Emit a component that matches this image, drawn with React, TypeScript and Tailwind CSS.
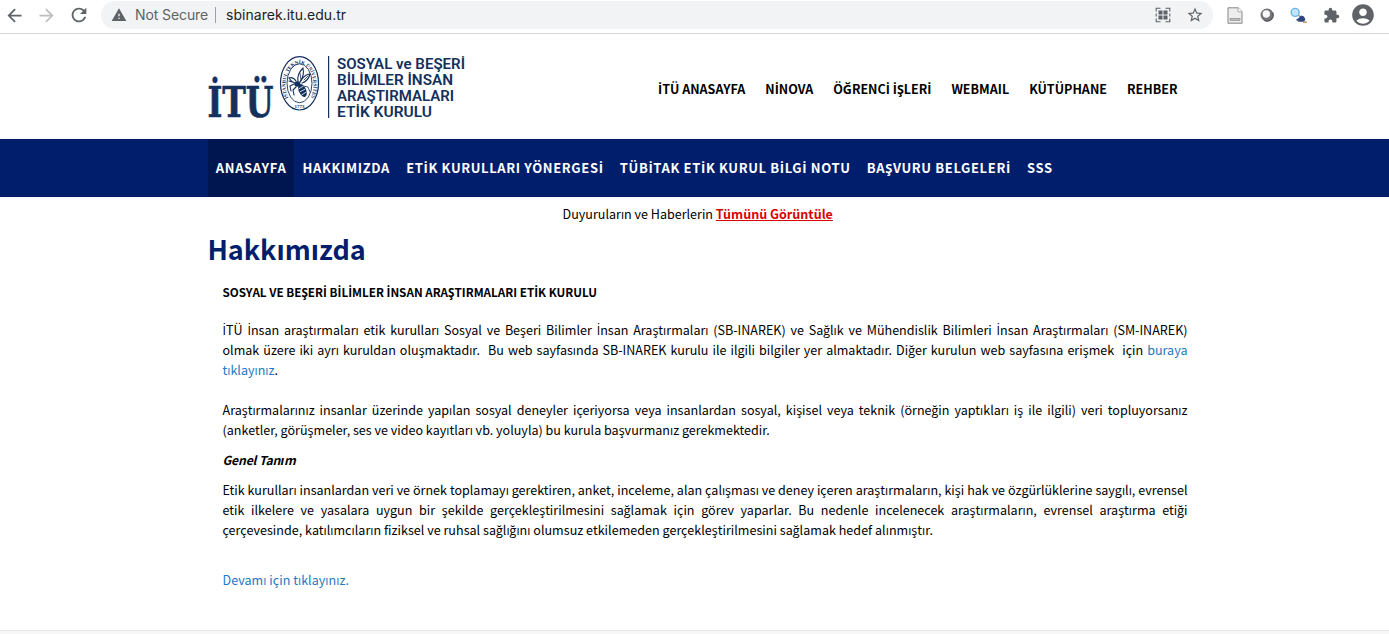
import { Fragment, ReactNode } from "react";
import { MdArrowBack, MdArrowForward, MdRefresh, MdWarning, MdStarBorder, MdExtension, MdAccountCircle } from "react-icons/md";

const quickLinks = ["İTÜ ANASAYFA", "NİNOVA", "ÖĞRENCİ İŞLERİ", "WEBMAIL", "KÜTÜPHANE", "REHBER"];
const menu = [
  "ANASAYFA",
  "HAKKIMIZDA",
  "ETİK KURULLARI YÖNERGESİ",
  "TÜBİTAK ETİK KURUL BİLGİ NOTU",
  "BAŞVURU BELGELERİ",
  "SSS",
];

/* Dotted capital I comes from Open Sans: the main face has no precomposed glyph. */
function Tr({ children }: { children: string }) {
  return (
    <>
      {children.split("İ").map((part, i) => (
        <Fragment key={i}>
          {i > 0 && <span className="font-['Open_Sans'] leading-[0]">İ</span>}
          {part}
        </Fragment>
      ))}
    </>
  );
}

function Justified({ children }: { children: ReactNode }) {
  return <span className="block whitespace-pre-wrap text-justify [text-align-last:justify]">{children}</span>;
}

function QrIcon() {
  return (
    <svg width="16" height="16" viewBox="0 0 16 16" fill="none" stroke="#5f6368" strokeWidth="1.1">
      <path d="M1.2 4.5V1.2H5.5M10.5 1.2h4.3V4.5M14.8 11.5v3.3H10.5M5.5 14.8H1.2V11.5M1.2 6.5v3M14.8 6.5v3" />
      <g fill="#5f6368" stroke="none">
        <rect x="3.5" y="3.5" width="4" height="4" />
        <rect x="8.5" y="3.5" width="4" height="4" />
        <rect x="3.5" y="8.5" width="4" height="4" />
        <rect x="8.5" y="8.5" width="4" height="4" />
      </g>
    </svg>
  );
}

function BrowserBar() {
  return (
    <div className="flex h-[34px] shrink-0 items-start border-b border-[#d5d7d9] bg-white pl-[4px] pr-[13px] font-['Inter',sans-serif]">
      <div className="flex h-[30px] w-[97px] items-center gap-[11px] text-[#5f6368]">
        <MdArrowBack size={21} />
        <MdArrowForward size={21} className="text-[#bcbec0]" />
        <MdRefresh size={22} />
      </div>
      <div className="mt-px flex h-7 w-[1112px] items-center rounded-full bg-[#f1f3f4] pl-[10px] pr-[9px] text-[14px] leading-7">
        <MdWarning size={16} className="text-[#5f6368]" />
        <span className="ml-2 w-[74px] whitespace-nowrap tracking-[-0.1px] text-[#5f6368]">Not Secure</span>
        <span className="ml-[6px] h-4 w-px bg-[#9aa0a6]" />
        <span className="ml-[10px] tracking-[0.03px] text-[#202124]">sbinarek.itu.edu.tr</span>
        <span className="ml-auto flex items-center gap-[15px] text-[#5f6368]">
          <QrIcon />
          <MdStarBorder size={18} />
        </span>
      </div>
      <div className="ml-auto flex h-[30px] items-center">
        <svg width="16" height="17" viewBox="0 0 16 17">
          <path d="M1 .8h10.2L15 4.6v11.6H1z" fill="#ededed" stroke="#858585" />
          <path d="M11 .8v4h4" fill="#fff" stroke="#999" strokeWidth="0.8" />
          <rect x="3" y="11.3" width="10" height="2.2" fill="#bbb" stroke="#888" strokeWidth="0.6" />
        </svg>
        <svg className="ml-[17px]" width="14" height="14" viewBox="0 0 14 14">
          <circle cx="7" cy="7" r="6.5" fill="#747578" />
          <path d="M12.6 4.5A6 6 0 0 1 4.5 12.4" fill="none" stroke="#56575a" strokeWidth="1.2" />
          <circle cx="6.3" cy="6" r="3.7" fill="#fafafa" />
        </svg>
        <svg className="ml-[16px]" width="18" height="17" viewBox="0 0 18 17">
          <path d="M8 8l5 4" stroke="#a88b74" strokeWidth="1.6" />
          <circle cx="5.2" cy="5.4" r="4" fill="#bfe6fb" stroke="#6db5e4" strokeWidth="1.4" />
          <path d="M6 12.8l3-2 2-2.2 3 .8 1.4 3.2-1.6 2.2H8.6z" fill="#2d4480" />
          <path d="M13.5 14.2l3.3.3.2 1.3h-4z" fill="#c0844f" />
          <path d="M6 13.2l3 .4-.4 1.4z" fill="#7b8db5" />
        </svg>
        <MdExtension size={17} className="ml-[15px] text-[#5f6368]" />
        <MdAccountCircle size={26} className="ml-[10px] text-[#5f6368]" />
      </div>
    </div>
  );
}

function Logo() {
  return (
    <svg className="overflow-visible" width="260" height="80" viewBox="0 0 260 80" fill="#14305c">
      <text
        transform="translate(-.6 62) scale(.755 1)"
        fontFamily="'DejaVu Serif'"
        fontWeight="700"
        fontSize="42"
        stroke="#14305c"
        strokeWidth="0.7"
      >
        İTÜ
      </text>
      <g fill="none" stroke="#14305c">
        <ellipse cx="91.5" cy="28.3" rx="19" ry="26.7" strokeWidth="1.2" />
        <ellipse cx="91.5" cy="28.3" rx="12.5" ry="19.5" strokeWidth="0.9" />
      </g>
      <path id="sealArc" d="M80.4 43A14 21.2 0 1 1 102.6 43" fill="none" />
      <text fontFamily="'Liberation Serif'" fontWeight="700" fontSize="5">
        <textPath href="#sealArc">İSTANBUL TEKNİK ÜNİVERSİTESİ</textPath>
      </text>
      <text x="91.5" y="53" textAnchor="middle" fontFamily="'Liberation Serif'" fontWeight="700" fontSize="5">1773</text>
      <g stroke="#14305c" strokeWidth="1.1" fill="none" strokeLinecap="round">
        <path d="M90 27c-1-5 1-10 5-14 1 5 0 10-3 14" />
        <path d="M92 27c3-5 6-8 10-8-1 4-4 8-8 9" />
        <path d="M88 26c-2-3-4-4-7-3 2 3 4 5 7 5M86 29l-4 2 1 5M88 32l-3 3 1 5M84 27l-3-1" />
        <path d="M95 31l5 1 2 5M92 18l1 7M96 25l4-4" strokeWidth="0.8" />
      </g>
      <ellipse cx="89.3" cy="29" rx="3" ry="2.7" />
      <ellipse cx="94.5" cy="35.5" rx="3.7" ry="6.8" transform="rotate(-24 94.5 35.5)" />
      <g stroke="#fff" strokeWidth="0.8">
        <path d="M90.5 34l5-3M91.8 37l5.5-3M93.5 40l5-3" />
      </g>
      <rect x="120" y="1" width="1.2" height="62" />
      <g fontFamily="Roboto" fontWeight="600" fontSize="15.3">
        <text x="129" y="14" textLength="128" lengthAdjust="spacingAndGlyphs">SOSYAL ve BEŞERİ</text>
        <text x="129" y="30" textLength="116" lengthAdjust="spacingAndGlyphs">BİLİMLER İNSAN</text>
        <text x="129" y="46" textLength="117" lengthAdjust="spacingAndGlyphs">ARAŞTIRMALARI</text>
        <text x="129" y="62" textLength="95" lengthAdjust="spacingAndGlyphs">ETİK KURULU</text>
      </g>
    </svg>
  );
}

export default function App() {
  return (
    <div className="flex h-[634px] flex-col overflow-hidden bg-white font-['Noto_Sans_CJK_JP','Open_Sans',sans-serif] text-[12.55px] leading-5 text-black">
      <BrowserBar />
      <header className="flex h-[105px] shrink-0 pl-[208px] pt-[21px]">
        <Logo />
        <nav className="ml-[190px] mt-[24px] flex gap-5 whitespace-nowrap text-[12.53px] font-bold">
          {quickLinks.map((l) => (
            <a key={l}><Tr>{l}</Tr></a>
          ))}
        </nav>
      </header>
      <nav className="flex h-[58px] shrink-0 gap-[0.6px] whitespace-nowrap bg-[#001e6c] pl-[208px] text-[13px] font-bold leading-[57px] tracking-[0.63px] text-white">
        {menu.map((m, i) => (
          <a key={m} className={i === 0 ? "bg-[#001650] px-[7.8px]" : "px-[7.8px]"}><Tr>{m}</Tr></a>
        ))}
      </nav>
      <p className="mt-[7px] pl-[562.5px]">
        Duyuruların ve Haberlerin <a className="font-bold text-[#d90000] underline">Tümünü Görüntüle</a>
      </p>
      <h1 className="mt-[8px] pl-[207.4px] text-[27px] font-bold leading-[33px] text-[#001e6c]">Hakkımızda</h1>
      <main className="ml-[222.5px] mt-[17px] w-[965px]">
        <h2 className="whitespace-nowrap text-[11.68px] font-bold">
          <Tr>SOSYAL VE BEŞERİ BİLİMLER İNSAN ARAŞTIRMALARI ETİK KURULU</Tr>
        </h2>
        <p className="mt-[18px]">
          <Justified><Tr>İTÜ İnsan araştırmaları etik kurulları Sosyal ve Beşeri Bilimler İnsan Araştırmaları (SB-INAREK) ve Sağlık ve Mühendislik Bilimleri İnsan Araştırmaları (SM-INAREK)</Tr></Justified>
          <Justified>
            olmak üzere iki ayrı kuruldan oluşmaktadır.&nbsp; Bu web sayfasında SB-INAREK kurulu ile ilgili bilgiler yer almaktadır. Diğer kurulun web sayfasına erişmek&nbsp; için <a className="text-[#1e78c2]">buraya</a>
          </Justified>
          <a className="text-[#1e78c2]">tıklayınız</a>.
        </p>
        <p className="mt-5">
          <Justified>Araştırmalarınız insanlar üzerinde yapılan sosyal deneyler içeriyorsa veya insanlardan sosyal, kişisel veya teknik (örneğin yaptıkları iş ile ilgili) veri topluyorsanız</Justified>
          (anketler, görüşmeler, ses ve video kayıtları vb. yoluyla) bu kurula başvurmanız gerekmektedir.
        </p>
        <h3 className="mt-[10px] text-[12.2px] font-bold italic tracking-[-0.15px]">
          Genel Tan<span className="ml-[0.4px]">ı</span>m
        </h3>
        <p className="mt-[10px]">
          <Justified>Etik kurulları insanlardan veri ve örnek toplamayı gerektiren, anket, inceleme, alan çalışması ve deney içeren araştırmaların, kişi hak ve özgürlüklerine saygılı, evrensel</Justified>
          <Justified>etik ilkelere ve yasalara uygun bir şekilde gerçekleştirilmesini sağlamak için görev yaparlar. Bu nedenle incelenecek araştırmaların, evrensel araştırma etiği</Justified>
          <span className="tracking-[0.018px]">çerçevesinde, katılımcıların fiziksel ve ruhsal sağlığını olumsuz etkilemeden gerçekleştirilmesini sağlamak hedef alınmıştır.</span>
        </p>
        <p className="mt-[30px]"><a className="tracking-[0.03px] text-[#1e78c2]">Devamı için tıklayınız.</a></p>
      </main>
      <footer className="mt-auto h-1 border-t border-[#e7e7e7] bg-[#f7f7f7]" />
    </div>
  );
}
